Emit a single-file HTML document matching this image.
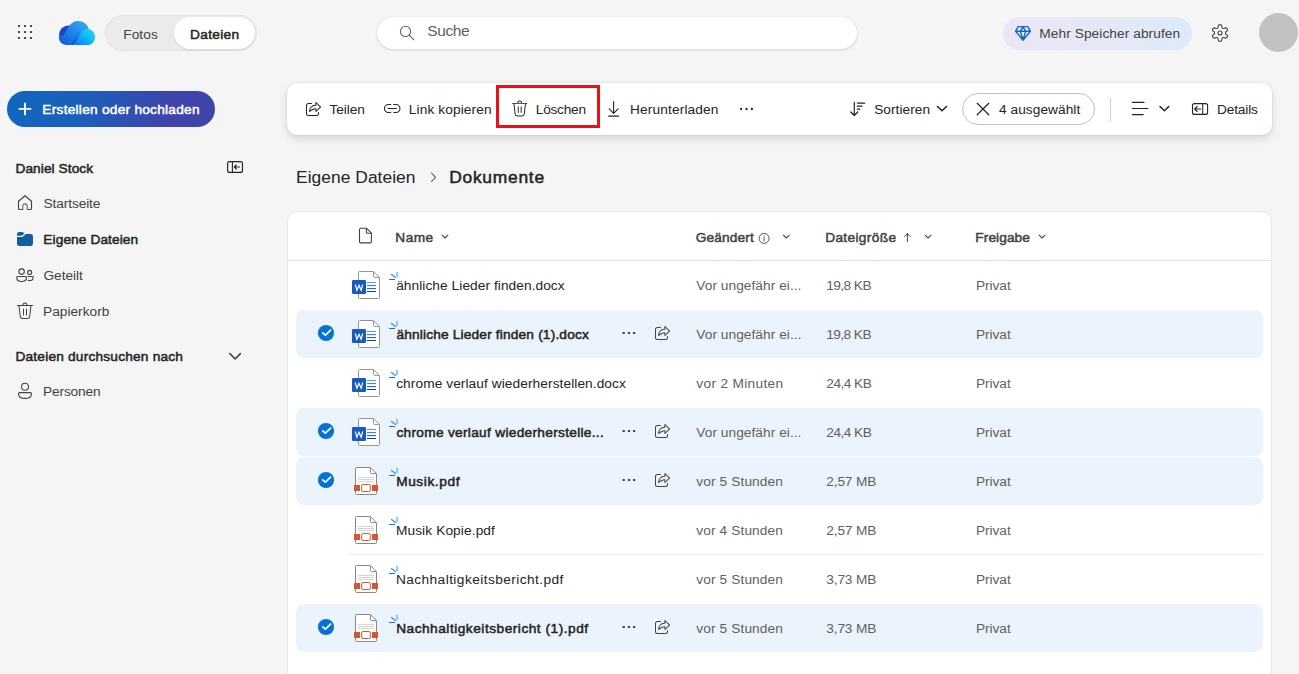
<!DOCTYPE html>
<html lang="de">
<head>
<meta charset="utf-8">
<title>Dokumente - OneDrive</title>
<style>
*{box-sizing:border-box;margin:0;padding:0}
html,body{width:1299px;height:674px;overflow:hidden;background:#f5f5f5}
body{font-family:"Liberation Sans",sans-serif;color:#242424;position:relative;font-size:14px}
.a{position:absolute}
.t{position:absolute;white-space:nowrap;line-height:20px;height:20px}
svg{position:absolute;overflow:visible}
#toggle{left:105px;top:15px;width:152px;height:36px;border-radius:18px;background:#ebebeb;border:1px solid #e3e3e3}
#toggle-on{left:174px;top:17px;width:81px;height:32px;border-radius:16px;background:#fff;box-shadow:0 1px 2px rgba(0,0,0,.10)}
#search{left:377px;top:17px;width:480px;height:32px;border-radius:16px;background:#fff;box-shadow:0 1px 3px rgba(0,0,0,.13),0 0 1px rgba(0,0,0,.12)}
#premium{left:1003px;top:17px;width:189px;height:33px;border-radius:17px;background:linear-gradient(90deg,#ece6f5,#deeaf8)}
#avatar{left:1259px;top:13px;width:39px;height:39px;border-radius:50%;background:#c1c1c1}
#create{left:7px;top:91px;width:208px;height:36px;border-radius:18px;background:linear-gradient(100deg,#0f67be 0%,#1c5eba 38%,#3f44aa 78%,#3f44aa 100%)}
#toolbar{left:287px;top:83px;width:985px;height:52px;border-radius:10px;background:#fff;box-shadow:0 4px 8px rgba(0,0,0,.13),0 0 2px rgba(0,0,0,.12)}
#redbox{left:496px;top:85px;width:104px;height:43px;border:3px solid #e91018}
#selpill{left:962px;top:93px;width:133px;height:32px;border-radius:16px;border:1px solid #c2c2c2;background:#fff}
#tsep{left:1110px;top:98px;width:1px;height:24px;background:#d1d1d1}
#card{left:287px;top:211px;width:985px;height:480px;border-radius:10px;background:#fff;border:1px solid #e9e9e9;box-shadow:0 0 1px rgba(0,0,0,.06)}
#hline{left:288px;top:260px;width:983px;height:1px;background:#e0e0e0}
.sel{position:absolute;left:296px;width:967px;height:48px;border-radius:8px;background:#ebf3fc}
.rl{position:absolute;left:348px;width:915px;height:1px;background:#ededed}
</style>
</head>
<body>
<!-- header -->
<div class="a" id="toggle"></div><div class="a" id="toggle-on"></div>
<div class="t" id="t-fotos" style="left:123.20px;top:25px;font-size:13.7px;color:#424242;letter-spacing:0.103px">Fotos</div>
<div class="t" id="t-dateien" style="left:190.05px;top:25px;font-size:13.7px;color:#242424;-webkit-text-stroke:.5px #242424;letter-spacing:0.306px">Dateien</div>
<div class="a" id="search"></div>
<div class="t" id="t-suche" style="left:427.30px;top:21px;font-size:15.5px;color:#616161;letter-spacing:-0.432px">Suche</div>
<div class="a" id="premium"></div>
<div class="t" id="t-mehr" style="left:1039.30px;top:24px;font-size:13.7px;color:#424242;letter-spacing:0.079px">Mehr Speicher abrufen</div>
<div class="a" id="avatar"></div>
<svg style="left:58px;top:20px" width="38" height="26" viewBox="58 20 38 26">
<defs>
<linearGradient id="cg1" x1="60" y1="26" x2="70" y2="40" gradientUnits="userSpaceOnUse"><stop offset="0" stop-color="#1f4bc4"/><stop offset="1" stop-color="#0b46b0"/></linearGradient>
<linearGradient id="cg2" x1="84" y1="21" x2="64" y2="46" gradientUnits="userSpaceOnUse"><stop offset="0" stop-color="#33a9f3"/><stop offset=".5" stop-color="#1f84ec"/><stop offset="1" stop-color="#0f5bd4"/></linearGradient>
<linearGradient id="cg3" x1="92" y1="29" x2="78" y2="46" gradientUnits="userSpaceOnUse"><stop offset="0" stop-color="#2bd6f0"/><stop offset=".5" stop-color="#0ab4f7"/><stop offset="1" stop-color="#0a7ff3"/></linearGradient>
<linearGradient id="cg4" x1="80" y1="30" x2="70" y2="45" gradientUnits="userSpaceOnUse"><stop offset="0" stop-color="#1656cc" stop-opacity=".0"/><stop offset=".5" stop-color="#134fc6" stop-opacity=".75"/><stop offset="1" stop-color="#0f49c0" stop-opacity=".9"/></linearGradient>
</defs>
<circle cx="68.3" cy="34.8" r="9.3" fill="url(#cg1)"/>
<path d="M78 21 c5.3 0 9.700 3.300 10.700 7.900 L80 45 H67 c-4.4 0 -8 -3 -8 -7 c0 -1 .8 -2.2 2.2 -2.2 c1.500 0 2.600 -1.100 3.400 -2.500 L69.200 26 C70.900 23 74.200 21 78 21 Z" fill="url(#cg2)"/>
<path d="M80.500 31.500 L71 45 H80 L86 33 Z" fill="url(#cg4)"/>
<path d="M87.200 28.800 c4.300 0 7.800 3.600 7.800 8.100 c0 4.500 -3.300 8.100 -7.600 8.100 H70.500 c2.800 -.4 4.600 -2.300 6 -4.800 l3.400 -6.200 c1.500 -3 4 -5.200 7.300 -5.200 Z" fill="url(#cg3)"/>
</svg>
<!-- sidebar -->
<div class="a" id="create"></div>
<div class="t" id="t-create" style="left:42.35px;top:100px;font-size:13.7px;color:#ffffff;-webkit-text-stroke:.5px #ffffff;letter-spacing:0.252px">Erstellen oder hochladen</div>
<div class="t" id="t-daniel" style="left:15.45px;top:159px;font-size:13.7px;color:#242424;-webkit-text-stroke:.5px #242424;letter-spacing:0.073px">Daniel Stock</div>
<div class="t" id="t-start" style="left:43.50px;top:194px;font-size:13.7px;color:#424242;letter-spacing:-0.101px">Startseite</div>
<div class="t" id="t-eigene" style="left:43.35px;top:230px;font-size:13.7px;color:#242424;-webkit-text-stroke:.5px #242424;letter-spacing:0.093px">Eigene Dateien</div>
<div class="t" id="t-geteilt" style="left:43.50px;top:266px;font-size:13.7px;color:#424242;letter-spacing:-0.026px">Geteilt</div>
<div class="t" id="t-papier" style="left:43.00px;top:302px;font-size:13.7px;color:#424242;letter-spacing:0.013px">Papierkorb</div>
<div class="t" id="t-durch" style="left:15.45px;top:347px;font-size:13.7px;color:#242424;-webkit-text-stroke:.5px #242424;letter-spacing:0.203px">Dateien durchsuchen nach</div>
<div class="t" id="t-pers" style="left:43.00px;top:382px;font-size:13.7px;color:#424242;letter-spacing:-0.14px">Personen</div>
<!-- toolbar -->
<div class="a" id="toolbar"></div>
<div class="a" id="selpill"></div><div class="a" id="tsep"></div>
<div class="t" id="t-teilen" style="left:329.60px;top:100px;font-size:13.7px;color:#242424;letter-spacing:-0.09px">Teilen</div>
<div class="t" id="t-link" style="left:408.80px;top:100px;font-size:13.7px;color:#242424;letter-spacing:0.108px">Link kopieren</div>
<div class="t" id="t-losch" style="left:535.80px;top:100px;font-size:13.7px;color:#242424;letter-spacing:-0.256px">Löschen</div>
<div class="t" id="t-herunter" style="left:630.10px;top:100px;font-size:13.7px;color:#242424;letter-spacing:0.131px">Herunterladen</div>
<div class="t" id="t-sort" style="left:874.20px;top:100px;font-size:13.7px;color:#242424;letter-spacing:0.034px">Sortieren</div>
<div class="t" id="t-ausg" style="left:999.00px;top:100px;font-size:13.7px;color:#242424;letter-spacing:0.049px">4 ausgewählt</div>
<div class="t" id="t-details" style="left:1217.10px;top:100px;font-size:13.7px;color:#242424;letter-spacing:-0.182px">Details</div>
<svg style="left:303px;top:99px" width="20" height="20" viewBox="0 0 20 20"><path d="m13.33 12.84 4.5-4.42.05-.07a.59.59 0 0 0-.05-.77l-4.5-4.42-.06-.05c-.36-.27-.9-.01-.9.47V5.7l-.22.01C8.6 6.01 6.5 8.26 6 12.35c-.06.53.54.85.93.5a9.64 9.64 0 0 1 4.45-2.38c.24-.06.5-.1.75-.12l.25-.02v2.17c.06.46.61.67.95.34Zm-1.1-6.12 1.15-.08V4.61L16.82 8l-3.44 3.39V9.23l-1.36.12c-1.7.19-3.32.87-4.83 2.02.3-1.33.8-2.34 1.47-3.06a5.2 5.2 0 0 1 3.57-1.59ZM5.5 4A2.5 2.5 0 0 0 3 6.5v8A2.5 2.5 0 0 0 5.5 17h8a2.5 2.5 0 0 0 2.5-2.5v-1a.5.5 0 0 0-1 0v1c0 .83-.67 1.5-1.5 1.5h-8A1.5 1.5 0 0 1 4 14.500v-8C4 5.670 4.670 5 5.500 5h3a.5.5 0 0 0 0-1h-3Z" fill="#242424"/></svg>
<svg style="left:509.6px;top:99.4px" width="19.4" height="19.4" viewBox="0 0 20 20"><path d="M8.5 4h3a1.5 1.5 0 0 0-3 0Zm-1 0a2.5 2.5 0 0 1 5 0h5a.5.5 0 0 1 0 1h-1.050l-1.200 10.340A3 3 0 0 1 12.270 18H7.730a3 3 0 0 1-2.980-2.660L3.550 5H2.500a.5.5 0 0 1 0-1h5ZM5.740 15.230A2 2 0 0 0 7.730 17h4.540a2 2 0 0 0 1.990-1.770L15.440 5H4.560l1.180 10.230ZM8.500 7.500c.280 0 .5.220.5.500v6a.5.5 0 0 1-1 0V8c0-.280.220-.500.500-.500ZM12 8a.5.5 0 0 0-1 0v6a.5.5 0 0 0 1 0V8Z" fill="#242424"/></svg>
<div class="a" id="redbox"></div>
<!-- breadcrumb -->
<div class="t" id="t-bc1" style="left:296.00px;top:167px;font-size:17.4px;color:#242424;letter-spacing:0.042px">Eigene Dateien</div>
<div class="t" id="t-bc2" style="left:449.15px;top:167px;font-size:17.4px;color:#242424;-webkit-text-stroke:.5px #242424;letter-spacing:0.755px">Dokumente</div>
<!-- file list -->
<div class="a" id="card"></div><div class="a" id="hline"></div>
<div class="t" id="t-hname" style="left:395.35px;top:228px;font-size:13.7px;color:#424242;-webkit-text-stroke:.5px #424242;letter-spacing:0.434px">Name</div>
<div class="t" id="t-hgeand" style="left:695.75px;top:228px;font-size:13.7px;color:#424242;-webkit-text-stroke:.5px #424242;letter-spacing:0.148px">Geändert</div>
<div class="t" id="t-hgros" style="left:825.15px;top:228px;font-size:13.7px;color:#424242;-webkit-text-stroke:.5px #424242;letter-spacing:0.356px">Dateigröße</div>
<div class="t" id="t-hfrei" style="left:975.35px;top:228px;font-size:13.7px;color:#424242;-webkit-text-stroke:.5px #424242;letter-spacing:0.07px">Freigabe</div>
<div class="sel" style="top:310px"></div>
<div class="sel" style="top:408px"></div>
<div class="sel" style="top:457px"></div>
<div class="sel" style="top:604px"></div>
<div class="rl" style="top:554px"></div>
<div class="t" id="t-n0" style="left:396.20px;top:276px;font-size:13.7px;color:#242424;letter-spacing:0.069px">ähnliche Lieder finden.docx</div>
<div class="t" id="t-d0" style="left:696.30px;top:276px;font-size:13.7px;color:#616161;letter-spacing:0.05px">Vor ungefähr ei...</div>
<div class="t" id="t-s0" style="left:826.20px;top:276px;font-size:13.7px;color:#616161;letter-spacing:-0.562px">19,8 KB</div>
<div class="t" id="t-p0" style="left:975.90px;top:276px;font-size:13.7px;color:#616161;letter-spacing:-0.037px">Privat</div>
<div class="t" id="t-n1" style="left:396.45px;top:325px;font-size:13.7px;color:#242424;-webkit-text-stroke:.5px #242424;letter-spacing:0.172px">ähnliche Lieder finden (1).docx</div>
<div class="t" id="t-d1" style="left:696.30px;top:325px;font-size:13.7px;color:#616161;letter-spacing:0.05px">Vor ungefähr ei...</div>
<div class="t" id="t-s1" style="left:826.20px;top:325px;font-size:13.7px;color:#616161;letter-spacing:-0.562px">19,8 KB</div>
<div class="t" id="t-p1" style="left:975.90px;top:325px;font-size:13.7px;color:#616161;letter-spacing:-0.037px">Privat</div>
<svg style="left:652px;top:323px" width="20" height="20" viewBox="0 0 20 20"><path d="m13.33 12.84 4.5-4.42.05-.07a.59.59 0 0 0-.05-.77l-4.5-4.42-.06-.05c-.36-.27-.9-.01-.9.47V5.7l-.22.01C8.6 6.01 6.5 8.26 6 12.35c-.06.53.54.85.93.5a9.64 9.64 0 0 1 4.45-2.38c.24-.06.5-.1.75-.12l.25-.02v2.17c.06.46.61.67.95.34Zm-1.1-6.12 1.15-.08V4.61L16.82 8l-3.44 3.39V9.23l-1.36.12c-1.7.19-3.32.87-4.83 2.02.3-1.33.8-2.34 1.47-3.06a5.2 5.2 0 0 1 3.57-1.59ZM5.5 4A2.5 2.5 0 0 0 3 6.5v8A2.5 2.5 0 0 0 5.5 17h8a2.5 2.5 0 0 0 2.5-2.5v-1a.5.5 0 0 0-1 0v1c0 .83-.67 1.5-1.5 1.5h-8A1.5 1.5 0 0 1 4 14.500v-8C4 5.670 4.670 5 5.500 5h3a.5.5 0 0 0 0-1h-3Z" fill="#424242"/></svg>
<div class="t" id="t-n2" style="left:396.20px;top:374px;font-size:13.7px;color:#242424;letter-spacing:0.084px">chrome verlauf wiederherstellen.docx</div>
<div class="t" id="t-d2" style="left:696.30px;top:374px;font-size:13.7px;color:#616161;letter-spacing:0.324px">vor 2 Minuten</div>
<div class="t" id="t-s2" style="left:826.30px;top:374px;font-size:13.7px;color:#616161;letter-spacing:-0.529px">24,4 KB</div>
<div class="t" id="t-p2" style="left:975.90px;top:374px;font-size:13.7px;color:#616161;letter-spacing:-0.037px">Privat</div>
<div class="t" id="t-n3" style="left:396.45px;top:423px;font-size:13.7px;color:#242424;-webkit-text-stroke:.5px #242424;letter-spacing:0.297px">chrome verlauf wiederherstelle...</div>
<div class="t" id="t-d3" style="left:696.30px;top:423px;font-size:13.7px;color:#616161;letter-spacing:0.05px">Vor ungefähr ei...</div>
<div class="t" id="t-s3" style="left:826.30px;top:423px;font-size:13.7px;color:#616161;letter-spacing:-0.529px">24,4 KB</div>
<div class="t" id="t-p3" style="left:975.90px;top:423px;font-size:13.7px;color:#616161;letter-spacing:-0.037px">Privat</div>
<svg style="left:652px;top:421px" width="20" height="20" viewBox="0 0 20 20"><path d="m13.33 12.84 4.5-4.42.05-.07a.59.59 0 0 0-.05-.77l-4.5-4.42-.06-.05c-.36-.27-.9-.01-.9.47V5.7l-.22.01C8.6 6.01 6.5 8.26 6 12.35c-.06.53.54.85.93.5a9.64 9.64 0 0 1 4.45-2.38c.24-.06.5-.1.75-.12l.25-.02v2.17c.06.46.61.67.95.34Zm-1.1-6.12 1.15-.08V4.61L16.82 8l-3.44 3.39V9.23l-1.36.12c-1.7.19-3.32.87-4.83 2.02.3-1.33.8-2.34 1.47-3.06a5.2 5.2 0 0 1 3.57-1.59ZM5.5 4A2.5 2.5 0 0 0 3 6.5v8A2.5 2.5 0 0 0 5.5 17h8a2.5 2.5 0 0 0 2.5-2.5v-1a.5.5 0 0 0-1 0v1c0 .83-.67 1.5-1.5 1.5h-8A1.5 1.5 0 0 1 4 14.500v-8C4 5.670 4.670 5 5.500 5h3a.5.5 0 0 0 0-1h-3Z" fill="#424242"/></svg>
<div class="t" id="t-n4" style="left:396.15px;top:472px;font-size:13.7px;color:#242424;-webkit-text-stroke:.5px #242424;letter-spacing:0.591px">Musik.pdf</div>
<div class="t" id="t-d4" style="left:696.30px;top:472px;font-size:13.7px;color:#616161;letter-spacing:0.116px">vor 5 Stunden</div>
<div class="t" id="t-s4" style="left:826.30px;top:472px;font-size:13.7px;color:#616161;letter-spacing:-0.157px">2,57 MB</div>
<div class="t" id="t-p4" style="left:975.90px;top:472px;font-size:13.7px;color:#616161;letter-spacing:-0.037px">Privat</div>
<svg style="left:652px;top:470px" width="20" height="20" viewBox="0 0 20 20"><path d="m13.33 12.84 4.5-4.42.05-.07a.59.59 0 0 0-.05-.77l-4.5-4.42-.06-.05c-.36-.27-.9-.01-.9.47V5.7l-.22.01C8.6 6.01 6.5 8.26 6 12.35c-.06.53.54.85.93.5a9.64 9.64 0 0 1 4.45-2.38c.24-.06.5-.1.75-.12l.25-.02v2.17c.06.46.61.67.95.34Zm-1.1-6.12 1.15-.08V4.61L16.82 8l-3.44 3.39V9.23l-1.36.12c-1.7.19-3.32.87-4.83 2.02.3-1.33.8-2.34 1.47-3.06a5.2 5.2 0 0 1 3.57-1.59ZM5.5 4A2.5 2.5 0 0 0 3 6.5v8A2.5 2.5 0 0 0 5.5 17h8a2.5 2.5 0 0 0 2.5-2.5v-1a.5.5 0 0 0-1 0v1c0 .83-.67 1.5-1.5 1.5h-8A1.5 1.5 0 0 1 4 14.500v-8C4 5.670 4.670 5 5.500 5h3a.5.5 0 0 0 0-1h-3Z" fill="#424242"/></svg>
<div class="t" id="t-n5" style="left:395.90px;top:521px;font-size:13.7px;color:#242424;letter-spacing:0.116px">Musik Kopie.pdf</div>
<div class="t" id="t-d5" style="left:696.30px;top:521px;font-size:13.7px;color:#616161;letter-spacing:0.116px">vor 4 Stunden</div>
<div class="t" id="t-s5" style="left:826.30px;top:521px;font-size:13.7px;color:#616161;letter-spacing:-0.157px">2,57 MB</div>
<div class="t" id="t-p5" style="left:975.90px;top:521px;font-size:13.7px;color:#616161;letter-spacing:-0.037px">Privat</div>
<div class="t" id="t-n6" style="left:395.90px;top:570px;font-size:13.7px;color:#242424;letter-spacing:0.431px">Nachhaltigkeitsbericht.pdf</div>
<div class="t" id="t-d6" style="left:696.30px;top:570px;font-size:13.7px;color:#616161;letter-spacing:0.116px">vor 5 Stunden</div>
<div class="t" id="t-s6" style="left:826.30px;top:570px;font-size:13.7px;color:#616161;letter-spacing:-0.157px">3,73 MB</div>
<div class="t" id="t-p6" style="left:975.90px;top:570px;font-size:13.7px;color:#616161;letter-spacing:-0.037px">Privat</div>
<div class="t" id="t-n7" style="left:396.15px;top:619px;font-size:13.7px;color:#242424;-webkit-text-stroke:.5px #242424;letter-spacing:0.505px">Nachhaltigkeitsbericht (1).pdf</div>
<div class="t" id="t-d7" style="left:696.30px;top:619px;font-size:13.7px;color:#616161;letter-spacing:0.116px">vor 5 Stunden</div>
<div class="t" id="t-s7" style="left:826.30px;top:619px;font-size:13.7px;color:#616161;letter-spacing:-0.157px">3,73 MB</div>
<div class="t" id="t-p7" style="left:975.90px;top:619px;font-size:13.7px;color:#616161;letter-spacing:-0.037px">Privat</div>
<svg style="left:652px;top:617px" width="20" height="20" viewBox="0 0 20 20"><path d="m13.33 12.84 4.5-4.42.05-.07a.59.59 0 0 0-.05-.77l-4.5-4.42-.06-.05c-.36-.27-.9-.01-.9.47V5.7l-.22.01C8.6 6.01 6.5 8.26 6 12.35c-.06.53.54.85.93.5a9.64 9.64 0 0 1 4.45-2.38c.24-.06.5-.1.75-.12l.25-.02v2.17c.06.46.61.67.95.34Zm-1.1-6.12 1.15-.08V4.61L16.82 8l-3.44 3.39V9.23l-1.36.12c-1.7.19-3.32.87-4.83 2.02.3-1.33.8-2.34 1.47-3.06a5.2 5.2 0 0 1 3.57-1.59ZM5.5 4A2.5 2.5 0 0 0 3 6.5v8A2.5 2.5 0 0 0 5.5 17h8a2.5 2.5 0 0 0 2.5-2.5v-1a.5.5 0 0 0-1 0v1c0 .83-.67 1.5-1.5 1.5h-8A1.5 1.5 0 0 1 4 14.500v-8C4 5.670 4.670 5 5.500 5h3a.5.5 0 0 0 0-1h-3Z" fill="#424242"/></svg>
<svg style="left:0;top:0" width="1299" height="674" viewBox="0 0 1299 674"><path d="M359.5 271.5 H373.4 L379.5 277.6 V297.5 a1 1 0 0 1 -1 1 H359.5 a1 1 0 0 1 -1 -1 V272.5 a1 1 0 0 1 1 -1 Z" fill="#fff" stroke="#979593" stroke-width="1"/><path d="M373.5 271.7 V276.3 a1.100 1.100 0 0 0 1.100 1.100 H379.3" fill="none" stroke="#979593" stroke-width="1"/><path d="M367 282.5 H376" stroke="#41a5ee" stroke-width="1.05"/><path d="M367 285.6 H376" stroke="#2b7cd3" stroke-width="1.05"/><path d="M367 288.6 H376" stroke="#185abd" stroke-width="1.05"/><path d="M367 291.5 H376" stroke="#103f91" stroke-width="1.05"/><rect x="352" y="280" width="14" height="14" rx="1.3" fill="#185abd"/><path d="M355.3 284.5 L356.9 290.2 L359 285.2 L361.100 290.2 L362.700 284.5" fill="none" stroke="#fff" stroke-width="1.15" stroke-linejoin="miter"/><path d="M397.05 272.4 V276.5" stroke="#7ab2f2" stroke-width="1.5" stroke-linecap="round"/><path d="M391.500 274.5 L395.500 277.5" stroke="#2496ef" stroke-width="1.25" stroke-linecap="round"/><path d="M389.500 279.5 H394.500" stroke="#0f70d8" stroke-width="1.15" stroke-linecap="round"/><path d="M359.5 320.5 H373.4 L379.5 326.6 V346.5 a1 1 0 0 1 -1 1 H359.5 a1 1 0 0 1 -1 -1 V321.5 a1 1 0 0 1 1 -1 Z" fill="#fff" stroke="#979593" stroke-width="1"/><path d="M373.5 320.7 V325.3 a1.100 1.100 0 0 0 1.100 1.100 H379.3" fill="none" stroke="#979593" stroke-width="1"/><path d="M367 331.5 H376" stroke="#41a5ee" stroke-width="1.05"/><path d="M367 334.6 H376" stroke="#2b7cd3" stroke-width="1.05"/><path d="M367 337.6 H376" stroke="#185abd" stroke-width="1.05"/><path d="M367 340.5 H376" stroke="#103f91" stroke-width="1.05"/><rect x="352" y="329" width="14" height="14" rx="1.3" fill="#185abd"/><path d="M355.3 333.5 L356.9 339.2 L359 334.2 L361.100 339.2 L362.700 333.5" fill="none" stroke="#fff" stroke-width="1.15" stroke-linejoin="miter"/><path d="M397.05 321.4 V325.5" stroke="#7ab2f2" stroke-width="1.5" stroke-linecap="round"/><path d="M391.500 323.5 L395.500 326.5" stroke="#2496ef" stroke-width="1.25" stroke-linecap="round"/><path d="M389.500 328.5 H394.500" stroke="#0f70d8" stroke-width="1.15" stroke-linecap="round"/><circle cx="326" cy="333" r="8.1" fill="#0672d4"/><path d="M322.700 332.8 L325.400 335.2 L330.600 330.2" fill="none" stroke="#fff" stroke-width="1.7" stroke-linecap="round" stroke-linejoin="round"/><rect x="622.5500000000001" y="331.9" width="2.3" height="2.2" rx=".6" fill="#424242"/><rect x="627.85" y="331.9" width="2.3" height="2.2" rx=".6" fill="#424242"/><rect x="632.95" y="331.9" width="2.3" height="2.2" rx=".6" fill="#424242"/><path d="M359.5 369.5 H373.4 L379.5 375.6 V395.5 a1 1 0 0 1 -1 1 H359.5 a1 1 0 0 1 -1 -1 V370.5 a1 1 0 0 1 1 -1 Z" fill="#fff" stroke="#979593" stroke-width="1"/><path d="M373.5 369.7 V374.3 a1.100 1.100 0 0 0 1.100 1.100 H379.3" fill="none" stroke="#979593" stroke-width="1"/><path d="M367 380.5 H376" stroke="#41a5ee" stroke-width="1.05"/><path d="M367 383.6 H376" stroke="#2b7cd3" stroke-width="1.05"/><path d="M367 386.6 H376" stroke="#185abd" stroke-width="1.05"/><path d="M367 389.5 H376" stroke="#103f91" stroke-width="1.05"/><rect x="352" y="378" width="14" height="14" rx="1.3" fill="#185abd"/><path d="M355.3 382.5 L356.9 388.2 L359 383.2 L361.100 388.2 L362.700 382.5" fill="none" stroke="#fff" stroke-width="1.15" stroke-linejoin="miter"/><path d="M397.05 370.4 V374.5" stroke="#7ab2f2" stroke-width="1.5" stroke-linecap="round"/><path d="M391.500 372.5 L395.500 375.5" stroke="#2496ef" stroke-width="1.25" stroke-linecap="round"/><path d="M389.500 377.5 H394.500" stroke="#0f70d8" stroke-width="1.15" stroke-linecap="round"/><path d="M359.5 418.5 H373.4 L379.5 424.6 V444.5 a1 1 0 0 1 -1 1 H359.5 a1 1 0 0 1 -1 -1 V419.5 a1 1 0 0 1 1 -1 Z" fill="#fff" stroke="#979593" stroke-width="1"/><path d="M373.5 418.7 V423.3 a1.100 1.100 0 0 0 1.100 1.100 H379.3" fill="none" stroke="#979593" stroke-width="1"/><path d="M367 429.5 H376" stroke="#41a5ee" stroke-width="1.05"/><path d="M367 432.6 H376" stroke="#2b7cd3" stroke-width="1.05"/><path d="M367 435.6 H376" stroke="#185abd" stroke-width="1.05"/><path d="M367 438.5 H376" stroke="#103f91" stroke-width="1.05"/><rect x="352" y="427" width="14" height="14" rx="1.3" fill="#185abd"/><path d="M355.3 431.5 L356.9 437.2 L359 432.2 L361.100 437.2 L362.700 431.5" fill="none" stroke="#fff" stroke-width="1.15" stroke-linejoin="miter"/><path d="M397.05 419.4 V423.5" stroke="#7ab2f2" stroke-width="1.5" stroke-linecap="round"/><path d="M391.500 421.5 L395.500 424.5" stroke="#2496ef" stroke-width="1.25" stroke-linecap="round"/><path d="M389.500 426.5 H394.500" stroke="#0f70d8" stroke-width="1.15" stroke-linecap="round"/><circle cx="326" cy="431" r="8.1" fill="#0672d4"/><path d="M322.700 430.8 L325.400 433.2 L330.600 428.2" fill="none" stroke="#fff" stroke-width="1.7" stroke-linecap="round" stroke-linejoin="round"/><rect x="622.5500000000001" y="429.9" width="2.3" height="2.2" rx=".6" fill="#424242"/><rect x="627.85" y="429.9" width="2.3" height="2.2" rx=".6" fill="#424242"/><rect x="632.95" y="429.9" width="2.3" height="2.2" rx=".6" fill="#424242"/><path d="M356.5 467.5 H370.3 L376.5 473.7 V493.5 a1 1 0 0 1 -1 1 H356.5 a1 1 0 0 1 -1 -1 V468.5 a1 1 0 0 1 1 -1 Z" fill="#fff" stroke="#8a8886" stroke-width="1"/><path d="M370.4 467.7 V472.5 a1.100 1.100 0 0 0 1.100 1.100 H376.3" fill="none" stroke="#8a8886" stroke-width="1"/><path d="M358 477.4 H374" stroke="#c8c6c4" stroke-width=".8"/><path d="M358 479.5 H374" stroke="#c8c6c4" stroke-width=".8"/><path d="M358 481.6 H374" stroke="#c8c6c4" stroke-width=".8"/><rect x="354" y="485" width="6" height="6" fill="#d65532"/><rect x="372" y="485" width="6" height="6" fill="#d65532"/><rect x="361.600" y="484.5" width="8.700" height="7" rx="1.5" fill="#fff" stroke="#d65532" stroke-width="1"/><path d="M397.05 468.4 V472.5" stroke="#7ab2f2" stroke-width="1.5" stroke-linecap="round"/><path d="M391.500 470.5 L395.500 473.5" stroke="#2496ef" stroke-width="1.25" stroke-linecap="round"/><path d="M389.500 475.5 H394.500" stroke="#0f70d8" stroke-width="1.15" stroke-linecap="round"/><circle cx="326" cy="480" r="8.1" fill="#0672d4"/><path d="M322.700 479.8 L325.400 482.2 L330.600 477.2" fill="none" stroke="#fff" stroke-width="1.7" stroke-linecap="round" stroke-linejoin="round"/><rect x="622.5500000000001" y="478.9" width="2.3" height="2.2" rx=".6" fill="#424242"/><rect x="627.85" y="478.9" width="2.3" height="2.2" rx=".6" fill="#424242"/><rect x="632.95" y="478.9" width="2.3" height="2.2" rx=".6" fill="#424242"/><path d="M356.5 516.5 H370.3 L376.5 522.7 V542.5 a1 1 0 0 1 -1 1 H356.5 a1 1 0 0 1 -1 -1 V517.5 a1 1 0 0 1 1 -1 Z" fill="#fff" stroke="#8a8886" stroke-width="1"/><path d="M370.4 516.7 V521.5 a1.100 1.100 0 0 0 1.100 1.100 H376.3" fill="none" stroke="#8a8886" stroke-width="1"/><path d="M358 526.4 H374" stroke="#c8c6c4" stroke-width=".8"/><path d="M358 528.5 H374" stroke="#c8c6c4" stroke-width=".8"/><path d="M358 530.6 H374" stroke="#c8c6c4" stroke-width=".8"/><rect x="354" y="534" width="6" height="6" fill="#d65532"/><rect x="372" y="534" width="6" height="6" fill="#d65532"/><rect x="361.600" y="533.5" width="8.700" height="7" rx="1.5" fill="#fff" stroke="#d65532" stroke-width="1"/><path d="M397.05 517.4 V521.5" stroke="#7ab2f2" stroke-width="1.5" stroke-linecap="round"/><path d="M391.500 519.5 L395.500 522.5" stroke="#2496ef" stroke-width="1.25" stroke-linecap="round"/><path d="M389.500 524.5 H394.500" stroke="#0f70d8" stroke-width="1.15" stroke-linecap="round"/><path d="M356.5 565.5 H370.3 L376.5 571.7 V591.5 a1 1 0 0 1 -1 1 H356.5 a1 1 0 0 1 -1 -1 V566.5 a1 1 0 0 1 1 -1 Z" fill="#fff" stroke="#8a8886" stroke-width="1"/><path d="M370.4 565.7 V570.5 a1.100 1.100 0 0 0 1.100 1.100 H376.3" fill="none" stroke="#8a8886" stroke-width="1"/><path d="M358 575.4 H374" stroke="#c8c6c4" stroke-width=".8"/><path d="M358 577.5 H374" stroke="#c8c6c4" stroke-width=".8"/><path d="M358 579.6 H374" stroke="#c8c6c4" stroke-width=".8"/><rect x="354" y="583" width="6" height="6" fill="#d65532"/><rect x="372" y="583" width="6" height="6" fill="#d65532"/><rect x="361.600" y="582.5" width="8.700" height="7" rx="1.5" fill="#fff" stroke="#d65532" stroke-width="1"/><path d="M397.05 566.4 V570.5" stroke="#7ab2f2" stroke-width="1.5" stroke-linecap="round"/><path d="M391.500 568.5 L395.500 571.5" stroke="#2496ef" stroke-width="1.25" stroke-linecap="round"/><path d="M389.500 573.5 H394.500" stroke="#0f70d8" stroke-width="1.15" stroke-linecap="round"/><path d="M356.5 614.5 H370.3 L376.5 620.7 V640.5 a1 1 0 0 1 -1 1 H356.5 a1 1 0 0 1 -1 -1 V615.5 a1 1 0 0 1 1 -1 Z" fill="#fff" stroke="#8a8886" stroke-width="1"/><path d="M370.4 614.7 V619.5 a1.100 1.100 0 0 0 1.100 1.100 H376.3" fill="none" stroke="#8a8886" stroke-width="1"/><path d="M358 624.4 H374" stroke="#c8c6c4" stroke-width=".8"/><path d="M358 626.5 H374" stroke="#c8c6c4" stroke-width=".8"/><path d="M358 628.6 H374" stroke="#c8c6c4" stroke-width=".8"/><rect x="354" y="632" width="6" height="6" fill="#d65532"/><rect x="372" y="632" width="6" height="6" fill="#d65532"/><rect x="361.600" y="631.5" width="8.700" height="7" rx="1.5" fill="#fff" stroke="#d65532" stroke-width="1"/><path d="M397.05 615.4 V619.5" stroke="#7ab2f2" stroke-width="1.5" stroke-linecap="round"/><path d="M391.500 617.5 L395.500 620.5" stroke="#2496ef" stroke-width="1.25" stroke-linecap="round"/><path d="M389.500 622.5 H394.500" stroke="#0f70d8" stroke-width="1.15" stroke-linecap="round"/><circle cx="326" cy="627" r="8.1" fill="#0672d4"/><path d="M322.700 626.8 L325.400 629.2 L330.600 624.2" fill="none" stroke="#fff" stroke-width="1.7" stroke-linecap="round" stroke-linejoin="round"/><rect x="622.5500000000001" y="625.9" width="2.3" height="2.2" rx=".6" fill="#424242"/><rect x="627.85" y="625.9" width="2.3" height="2.2" rx=".6" fill="#424242"/><rect x="632.95" y="625.9" width="2.3" height="2.2" rx=".6" fill="#424242"/></svg>
<svg style="left:15px;top:300.7px" width="20" height="20" viewBox="0 0 20 20"><path d="M8.5 4h3a1.5 1.5 0 0 0-3 0Zm-1 0a2.5 2.5 0 0 1 5 0h5a.5.5 0 0 1 0 1h-1.050l-1.200 10.340A3 3 0 0 1 12.270 18H7.730a3 3 0 0 1-2.980-2.660L3.550 5H2.500a.5.5 0 0 1 0-1h5ZM5.740 15.230A2 2 0 0 0 7.730 17h4.540a2 2 0 0 0 1.990-1.770L15.440 5H4.560l1.180 10.230ZM8.500 7.500c.280 0 .5.220.5.500v6a.5.5 0 0 1-1 0V8c0-.280.220-.500.500-.500ZM12 8a.5.5 0 0 0-1 0v6a.5.5 0 0 0 1 0V8Z" fill="#424242"/></svg>
<svg style="left:0;top:0" width="1299" height="674" viewBox="0 0 1299 674"><rect x="17.95" y="24.95" width="2.1" height="2.1" rx=".5" fill="#484848"/><rect x="17.95" y="30.95" width="2.1" height="2.1" rx=".5" fill="#484848"/><rect x="17.95" y="36.95" width="2.1" height="2.1" rx=".5" fill="#484848"/><rect x="23.95" y="24.95" width="2.1" height="2.1" rx=".5" fill="#484848"/><rect x="23.95" y="30.95" width="2.1" height="2.1" rx=".5" fill="#484848"/><rect x="23.95" y="36.95" width="2.1" height="2.1" rx=".5" fill="#484848"/><rect x="29.95" y="24.95" width="2.1" height="2.1" rx=".5" fill="#484848"/><rect x="29.95" y="30.95" width="2.1" height="2.1" rx=".5" fill="#484848"/><rect x="29.95" y="36.95" width="2.1" height="2.1" rx=".5" fill="#484848"/><circle cx="405.5" cy="31.4" r="5.1" fill="none" stroke="#616161" stroke-width="1.05"/><path d="M409.2 35.1 L413.9 39.8" fill="none" stroke="#616161" stroke-width="1.05" stroke-linecap="round" stroke-linejoin="round" /><path d="M1018.2 26.6 H1027.8 L1030.4 31.2 L1023 40.3 L1015.6 31.2 Z M1015.6 31.2 H1030.4 M1023 26.9 L1020.3 31.2 L1023 40 L1025.7 31.2 Z" fill="none" stroke="#0f6cbd" stroke-width="1.4" stroke-linecap="round" stroke-linejoin="round" /><path d="M1225.45 33.00 L1225.47 32.71 L1225.55 32.42 L1225.69 32.10 L1225.91 31.74 L1226.66 31.21 L1227.38 30.60 L1227.51 30.12 L1227.51 29.66 L1227.41 29.22 L1227.23 28.83 L1226.98 28.47 L1226.65 28.17 L1226.25 27.94 L1225.76 27.81 L1224.88 28.12 L1224.05 28.51 L1223.62 28.52 L1223.28 28.48 L1222.99 28.40 L1222.72 28.28 L1222.49 28.12 L1222.27 27.90 L1222.06 27.62 L1221.87 27.25 L1221.79 26.34 L1221.61 25.41 L1221.26 25.06 L1220.86 24.83 L1220.44 24.69 L1220.00 24.65 L1219.56 24.69 L1219.14 24.83 L1218.74 25.06 L1218.39 25.41 L1218.21 26.34 L1218.13 27.25 L1217.94 27.62 L1217.73 27.90 L1217.51 28.12 L1217.28 28.28 L1217.01 28.40 L1216.72 28.48 L1216.38 28.52 L1215.95 28.51 L1215.12 28.12 L1214.24 27.81 L1213.75 27.94 L1213.35 28.17 L1213.02 28.47 L1212.77 28.83 L1212.59 29.22 L1212.49 29.66 L1212.49 30.12 L1212.62 30.60 L1213.34 31.21 L1214.09 31.74 L1214.31 32.10 L1214.45 32.42 L1214.53 32.71 L1214.55 33.00 L1214.53 33.29 L1214.45 33.58 L1214.31 33.90 L1214.09 34.26 L1213.34 34.79 L1212.62 35.40 L1212.49 35.88 L1212.49 36.34 L1212.59 36.78 L1212.77 37.17 L1213.02 37.53 L1213.35 37.83 L1213.75 38.06 L1214.24 38.19 L1215.12 37.88 L1215.95 37.49 L1216.38 37.48 L1216.72 37.52 L1217.01 37.60 L1217.28 37.72 L1217.51 37.88 L1217.73 38.10 L1217.94 38.38 L1218.13 38.75 L1218.21 39.66 L1218.39 40.59 L1218.74 40.94 L1219.14 41.17 L1219.56 41.31 L1220.00 41.35 L1220.44 41.31 L1220.86 41.17 L1221.26 40.94 L1221.61 40.59 L1221.79 39.66 L1221.87 38.75 L1222.06 38.38 L1222.27 38.10 L1222.49 37.88 L1222.72 37.72 L1222.99 37.60 L1223.28 37.52 L1223.62 37.48 L1224.05 37.49 L1224.88 37.88 L1225.76 38.19 L1226.25 38.06 L1226.65 37.83 L1226.98 37.53 L1227.23 37.18 L1227.41 36.78 L1227.51 36.34 L1227.51 35.88 L1227.38 35.40 L1226.66 34.79 L1225.91 34.26 L1225.69 33.90 L1225.55 33.58 L1225.47 33.29 Z" fill="none" stroke="#424242" stroke-width="1.1" stroke-linejoin="round"/><circle cx="1220" cy="33" r="2" fill="none" stroke="#424242" stroke-width="1.1"/><path d="M25 103.4 V114.4 M19.5 108.9 H30.5" fill="none" stroke="#fff" stroke-width="1.9" stroke-linecap="round" stroke-linejoin="round" /><rect x="227.6" y="161.6" width="14.9" height="10.8" rx="2" fill="none" stroke="#242424" stroke-width="1.15"/><path d="M232.4 161.6 V172.4" fill="none" stroke="#242424" stroke-width="1.1" stroke-linecap="round" stroke-linejoin="round" /><path d="M239.6 167 H234.6 M236.3 165 L234.3 167 L236.3 169" fill="none" stroke="#242424" stroke-width="1.1" stroke-linecap="round" stroke-linejoin="round" /><path d="M18.5 201.2 L25 195.7 L31.5 201.2 V208.5 a1 1 0 0 1 -1 1 H27.4" fill="none" stroke="#424242" stroke-width="1.15" stroke-linecap="round" stroke-linejoin="round" /><path d="M18.5 201.2 V208.5 a1 1 0 0 0 1 1 H22.6" fill="none" stroke="#424242" stroke-width="1.15" stroke-linecap="round" stroke-linejoin="round" /><path d="M22.8 209.5 V206.1 a2.2 2.2 0 0 1 4.4 0 V209.5" fill="none" stroke="#707070" stroke-width="1.15" stroke-linecap="round" stroke-linejoin="round" /><path d="M17 235.7 V234.2 a2.2 2.2 0 0 1 2.2 -2.2 H22 c.6 0 1.2 .25 1.6 .7 L24.4 233.4 L22.5 235.3 a1.3 1.3 0 0 1 -.9 .4 Z" fill="#115ea3"/><path d="M17 237 H21.9 c.6 0 1.1 -.25 1.5 -.65 L25.7 234 H30.7 a2.3 2.3 0 0 1 2.3 2.3 V243.7 a2.3 2.3 0 0 1 -2.3 2.3 H19.3 a2.3 2.3 0 0 1 -2.3 -2.3 Z" fill="#115ea3"/><circle cx="21.6" cy="271.6" r="2.75" fill="none" stroke="#424242" stroke-width="1.1"/><circle cx="29.6" cy="272.4" r="2.05" fill="none" stroke="#424242" stroke-width="1.1"/><path d="M17.7 276.5 H25.5 a1 1 0 0 1 1 1 c0 2.6 -2 4 -4.9 4 s-4.9 -1.4 -4.9 -4 a1 1 0 0 1 1 -1 Z" fill="none" stroke="#424242" stroke-width="1.1" stroke-linecap="round" stroke-linejoin="round" /><path d="M27.9 276.5 H32.3 a.9 .9 0 0 1 .9 .9 c0 2 -1.6 3.1 -3.7 3.1 c-.5 0 -1 -.05 -1.4 -.15" fill="none" stroke="#424242" stroke-width="1.1" stroke-linecap="round" stroke-linejoin="round" /><circle cx="25" cy="386.75" r="3.45" fill="none" stroke="#424242" stroke-width="1.1"/><path d="M19.6 392.6 H30.4 a1.1 1.1 0 0 1 1.1 1.1 c0 3.1 -2.9 4.7 -6.5 4.7 s-6.5 -1.6 -6.5 -4.7 a1.1 1.1 0 0 1 1.1 -1.1 Z" fill="none" stroke="#424242" stroke-width="1.1" stroke-linecap="round" stroke-linejoin="round" /><path d="M229.8 353.6 L235.1 359 L240.4 353.6" fill="none" stroke="#424242" stroke-width="1.55" stroke-linecap="round" stroke-linejoin="round" /><path d="M613.6 101.5 V113.2 M609.1 108.8 L613.6 113.3 L618.1 108.8 M608.6 116.1 H618.6" fill="none" stroke="#242424" stroke-width="1.1" stroke-linecap="round" stroke-linejoin="round" /><path d="M390.7 104.45 H388.45 a4 4 0 0 0 0 8 H390.7 M393.7 104.45 H395.95 a4 4 0 0 1 0 8 H393.7 M388 108.45 H396.4" fill="none" stroke="#242424" stroke-width="1.1" stroke-linecap="round" stroke-linejoin="round" /><circle cx="741.1" cy="109" r="1.15" fill="#242424"/><circle cx="746.5" cy="109" r="1.15" fill="#242424"/><circle cx="751.9" cy="109" r="1.15" fill="#242424"/><path d="M854.3 102.3 V115.3 M850.8 112 L854.3 115.5 L857.8 112 M857.4 103.1 H864.7 M857.4 106.2 H861.9 M857.4 109.2 H859.8" fill="none" stroke="#242424" stroke-width="1.2" stroke-linecap="round" stroke-linejoin="round" /><path d="M937.5 106.5 L942 110.8 L946.5 106.5" fill="none" stroke="#242424" stroke-width="1.5" stroke-linecap="round" stroke-linejoin="round" /><path d="M1160 106.5 L1164.4 110.8 L1168.8 106.5" fill="none" stroke="#242424" stroke-width="1.5" stroke-linecap="round" stroke-linejoin="round" /><path d="M977.2 103.3 L988.8 114.8 M988.8 103.3 L977.2 114.8" fill="none" stroke="#242424" stroke-width="1.25" stroke-linecap="round" stroke-linejoin="round" /><path d="M1132.4 102.3 H1144 M1132.4 108.5 H1148 M1132.4 114.6 H1143.2" fill="none" stroke="#242424" stroke-width="1.15" stroke-linecap="round" stroke-linejoin="round" /><rect x="1192.5" y="103.6" width="15.1" height="10.8" rx="2" fill="none" stroke="#242424" stroke-width="1.1"/><path d="M1202.7 103.6 V114.4 M1200.8 109 H1194.8 M1197.2 106.5 L1194.6 109 L1197.2 111.5" fill="none" stroke="#242424" stroke-width="1.05" stroke-linecap="round" stroke-linejoin="round" /><path d="M431.5 173.2 L435.6 177.3 L431.5 181.4" fill="none" stroke="#616161" stroke-width="1.1" stroke-linecap="round" stroke-linejoin="round" /><path d="M360.5 228.3 H366.6 L371.4 233.1 V241.5 a1.4 1.4 0 0 1 -1.4 1.4 H360.9 a1.4 1.4 0 0 1 -1.4 -1.4 V229.7 a1.4 1.4 0 0 1 1.4 -1.4 Z M366.4 228.5 V231.9 a1.3 1.3 0 0 0 1.3 1.3 H371.2" fill="none" stroke="#424242" stroke-width="1.1" stroke-linecap="round" stroke-linejoin="round" /><path d="M442.1 235.2 L445.0 238 L447.90000000000003 235.2" fill="none" stroke="#4a4a4a" stroke-width="1.1" stroke-linecap="round" stroke-linejoin="round" /><path d="M783.4 235.2 L786.3 238 L789.1999999999999 235.2" fill="none" stroke="#4a4a4a" stroke-width="1.1" stroke-linecap="round" stroke-linejoin="round" /><path d="M925.2 235.2 L928.1 238 L931.0 235.2" fill="none" stroke="#4a4a4a" stroke-width="1.1" stroke-linecap="round" stroke-linejoin="round" /><path d="M1039.2 235.2 L1042.1000000000001 238 L1045.0 235.2" fill="none" stroke="#4a4a4a" stroke-width="1.1" stroke-linecap="round" stroke-linejoin="round" /><circle cx="764.1" cy="238.4" r="5" fill="none" stroke="#424242" stroke-width=".9"/><path d="M764.1 237.6 V241" fill="none" stroke="#424242" stroke-width="0.9" stroke-linecap="round" stroke-linejoin="round" /><circle cx="764.1" cy="235.9" r=".6" fill="#424242"/><path d="M907.4 233.7 V241.7 M904.600 236.5 L907.4 233.600 L910.2 236.5" fill="none" stroke="#424242" stroke-width="1.0" stroke-linecap="round" stroke-linejoin="round" /></svg>
</body>
</html>
